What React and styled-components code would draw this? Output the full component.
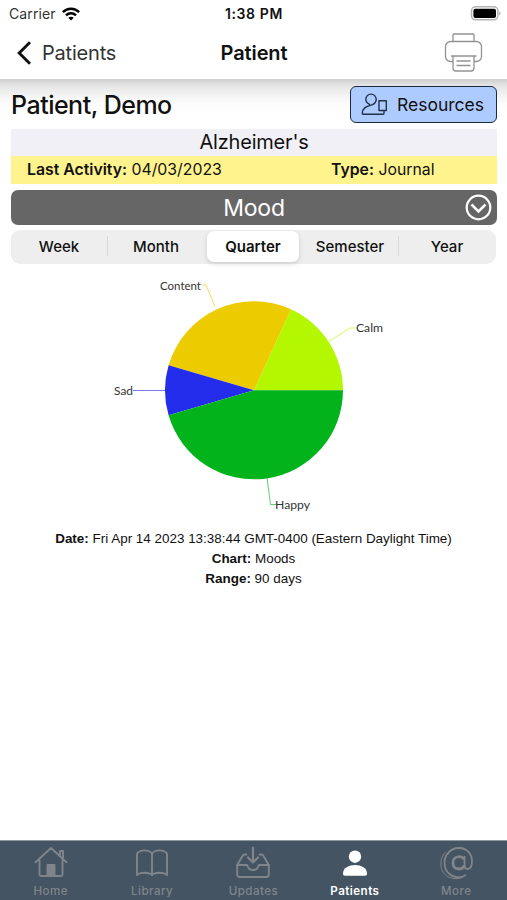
// App.jsx
import React, { useState } from "react";
import styled, { createGlobalStyle } from "styled-components";

const ranges = ["Week", "Month", "Quarter", "Semester", "Year"];

const moods = [
  { name: "Calm", value: 2, color: "#b3f700", x: 356, y: 331.5, width: 27, line: "329,341.5 350,328 356,328" },
  { name: "Content", value: 3, color: "#eccb00", x: 160, y: 289.5, width: 41, line: "215,306.5 206,285 201,285" },
  { name: "Sad", value: 1, color: "#252dec", x: 114, y: 394.5, width: 19, line: "165,390.5 133,390.5" },
  { name: "Happy", value: 5, color: "#02b31c", x: 275, y: 508.5, width: 35, line: "267,478 270.5,504.5 276,504.5" },
];

const tabs = [
  { name: "Home", Icon: HomeIcon },
  { name: "Library", Icon: LibraryIcon },
  { name: "Updates", Icon: UpdatesIcon },
  { name: "Patients", Icon: PatientsIcon },
  { name: "More", Icon: MoreIcon },
];

const MoodPie = () => {
  const cx = 254;
  const cy = 390.3;
  const r = 89;
  const total = moods.reduce((sum, m) => sum + m.value, 0);
  let angle = 0;

  const point = (a) => `${cx + r * Math.cos(a)} ${cy - r * Math.sin(a)}`;

  const slices = moods.map((mood) => {
    const start = angle;
    angle += (mood.value / total) * Math.PI * 2;
    return {
      ...mood,
      d: `M${cx} ${cy} L${point(start)} A${r} ${r} 0 0 0 ${point(angle)} Z`,
    };
  });

  return (
    <Chart viewBox="0 264 507 256">
      {slices.map((s) => (
        <g key={s.name}>
          <path d={s.d} fill={s.color} />
          <polyline
            points={s.line}
            fill="none"
            stroke={s.color}
            strokeWidth="0.9"
            strokeOpacity="0.7"
          />
          <ChartLabel x={s.x} y={s.y} textLength={s.width} lengthAdjust="spacingAndGlyphs">
            {s.name}
          </ChartLabel>
        </g>
      ))}
    </Chart>
  );
};

const App = () => {
  const [range, setRange] = useState("Quarter");
  const [tab, setTab] = useState("Patients");

  return (
    <Screen>
      <GlobalStyle />
      <StatusBar>
        <Carrier>
          <span>Carrier</span>
          <WifiIcon />
        </Carrier>
        <Time>1:38 PM</Time>
        <BatteryIcon />
      </StatusBar>

      <NavBar>
        <BackButton>
          <BackIcon />
          Patients
        </BackButton>
        <NavTitle>Patient</NavTitle>
        <PrinterIcon />
      </NavBar>

      <Content>
        <PatientRow>
          <PatientName>Patient, Demo</PatientName>
          <ResourcesButton>
            <ResourcesIcon />
            Resources
          </ResourcesButton>
        </PatientRow>
        <Diagnosis>Alzheimer's</Diagnosis>
        <ActivityRow>
          <span><b>Last Activity:</b> 04/03/2023</span>
          <ActivityType><b>Type:</b> Journal</ActivityType>
        </ActivityRow>
        <SectionHeader>
          <SectionTitle>Mood</SectionTitle>
          <ExpandIcon />
        </SectionHeader>
        <Segments>
          {ranges.map((item, i) => (
            <Segment
              key={item}
              $active={item === range}
              $divider={i > 0 && item !== range && ranges[i - 1] !== range}
              onClick={() => setRange(item)}
            >
              {item}
            </Segment>
          ))}
        </Segments>
      </Content>

      <MoodPie />

      <Details>
        <div><b>Date:</b> Fri Apr 14 2023 13:38:44 GMT-0400 (Eastern Daylight Time)</div>
        <div><b>Chart:</b> Moods</div>
        <div><b>Range:</b> 90 days</div>
      </Details>

      <TabBar>
        {tabs.map(({ name, Icon }) => (
          <Tab key={name} $active={name === tab} onClick={() => setTab(name)}>
            <Icon />
            {name}
          </Tab>
        ))}
      </TabBar>
    </Screen>
  );
};

export default App;

// Icons
function WifiIcon() {
  return (
    <svg width="18" height="14" viewBox="0 0 18 14" fill="none" stroke="#000" strokeWidth="2.5">
      <path d="M.9 5.2C5.4.6 12.6.6 17.1 5.2" />
      <path d="M4 8.4c2.8-2.8 7.2-2.8 10 0" />
      <path d="M9 13.4 6.3 10.7C7.8 9.3 10.2 9.3 11.7 10.7Z" fill="#000" stroke="none" />
    </svg>
  );
}

function BatteryIcon() {
  return (
    <svg width="31" height="15" viewBox="0 0 31 15">
      <rect x="1.5" y=".8" width="26.4" height="13" rx="4" fill="#fff" stroke="#b3b3b3" strokeWidth="1.5" />
      <rect x="3.4" y="2.7" width="22.6" height="9.2" rx="2" fill="#000" />
      <path d="M29.2 5.2c1.8.6 1.8 3.6 0 4.2Z" fill="#aaa" />
    </svg>
  );
}

function BackIcon() {
  return (
    <svg width="15" height="24" viewBox="0 0 15 24" fill="none" stroke="#111" strokeWidth="2.9">
      <path d="M13 1.2 2.2 12 13 22.8" />
    </svg>
  );
}

function PrinterIcon() {
  return (
    <svg width="40" height="40" viewBox="0 0 40 40" fill="none" stroke="#929292" strokeWidth="1.3">
      <path d="M9 8.5V2q0-1 1-1h19q1 0 1 1v6.5" />
      <path d="M9 28.5H6.500a5 5 0 0 1-5-5v-10a5 5 0 0 1 5-5h26a5 5 0 0 1 5 5v10a5 5 0 0 1-5 5H30" />
      <path d="M7 23h25.5M9 23v12q0 3 3 3h15q3 0 3-3V23M12.5 28h14M12.5 32.5h14" />
    </svg>
  );
}

function ResourcesIcon() {
  return (
    <svg width="27" height="23" viewBox="0 0 27 23" fill="none" stroke="#203047" strokeWidth="1.4" strokeLinejoin="round">
      <path d="M9 11.6C6 10.3 4.8 8.5 4.8 6.3a5.2 5.2 0 0 1 10.4 0c0 2.8-1.6 4.4-3.6 5.4C6.5 13.5 1.3 14 1.3 20.5q0 .7.7.7h20q1 0 1-1V18" />
      <rect x="18" y="7.7" width="7.3" height="9.8" />
    </svg>
  );
}

function ExpandIcon() {
  return (
    <svg width="27" height="27" viewBox="0 0 27 27" fill="none" stroke="#fff" strokeWidth="2.2">
      <circle cx="13.5" cy="13.5" r="11.8" />
      <path d="m6.5 10.5 7 7 7-7" strokeWidth="2.5" />
    </svg>
  );
}

function HomeIcon() {
  return (
    <svg width="34" height="34" viewBox="0 0 34 34" fill="none" stroke="currentColor" strokeWidth="1.9" strokeLinejoin="round" strokeLinecap="round">
      <path d="M1.5 16.2 17 2l15.500 14.200M5.5 14v14.500q0 1.500 1.500 1.500h20q1.500 0 1.500-1.500V14M26 9V5h3v7" />
      <path d="M13.5 30V19h7v11" fill="currentColor" />
    </svg>
  );
}

function LibraryIcon() {
  return (
    <svg width="34" height="34" viewBox="0 0 34 34" fill="none" stroke="currentColor" strokeWidth="1.9" strokeLinejoin="round">
      <path d="M17 7.5C14 3.3 5 3.3 2 7.5V29c3-3 12-3 15 0 3-3 12-3 15 0V7.5C29 3.3 20 3.3 17 7.5V29" />
    </svg>
  );
}

function UpdatesIcon() {
  return (
    <svg width="34" height="34" viewBox="0 0 34 34" fill="none" stroke="currentColor" strokeWidth="1.9" strokeLinejoin="round" strokeLinecap="round">
      <path d="M10.5 8.5h-2q-1.300 0-2 1.500L1.200 19v9.500q0 2.500 2.500 2.500h26.600q2.500 0 2.500-2.500V19l-5.300-9Q26.800 8.500 25.500 8.500h-2" />
      <path d="M1.200 19h9.300q1 0 1.300 1.500 1 3.500 5.200 3.500t5.200-3.500Q22.500 19 23.500 19h9.300" />
      <path d="M17 1.500v15M12 11.500l5 5 5-5" strokeWidth="2.2" />
    </svg>
  );
}

function PatientsIcon() {
  return (
    <svg width="34" height="34" viewBox="0 0 34 34" fill="currentColor">
      <circle cx="17" cy="10.7" r="6.2" />
      <path d="M5 27.500c0-11.500 24-11.500 24 0 0 1.600-.6 2.200-2 2.200H7c-1.400 0-2-.6-2-2.200Z" />
    </svg>
  );
}

function MoreIcon() {
  return (
    <svg width="34" height="34" viewBox="0 0 34 34" fill="none" stroke="currentColor" strokeWidth="1.8">
      <path d="M27 29C17 35 5.500 28 5.500 17 5.500 8 12 2 20 2c8 0 13 6 13 13.500 0 5-2 7.500-4.800 7.500-2 0-2.700-1.200-2.700-3.500V10" />
      <path d="M25 13.500C23.500 9 14 9.500 14 17s9 7.500 11.500 2.500" strokeWidth="2.8" />
      <path d="M6.500 6C-.5 13-.5 29 13 32.200c4 1 8 .4 11-1M9 8.500C13 1.500 20 .7 25 2.500" strokeWidth="1" />
    </svg>
  );
}

const GlobalStyle = createGlobalStyle`
  * {
    box-sizing: border-box;
  }
  body {
    margin: 0;
    background: #fff;
  }
  button {
    border: none;
    background: none;
    padding: 0;
    font-family: inherit;
    color: inherit;
    cursor: pointer;
  }
`;

const Screen = styled.div`
  display: flex;
  flex-direction: column;
  height: 100vh;
  background: #fff;
  color: #111;
  font-family: Inter, "Liberation Sans", sans-serif;
  overflow: hidden;
  white-space: nowrap;
`;

const StatusBar = styled.div`
  display: grid;
  grid-template-columns: 1fr auto 1fr;
  align-items: center;
  flex: none;
  height: 27px;
  padding: 0 6px 0 9px;

  > :last-child {
    justify-self: end;
  }
`;

const Carrier = styled.div`
  display: flex;
  align-items: center;
  gap: 6px;
  font-size: 14px;
  letter-spacing: 0.1px;
  color: #333;
`;

const Time = styled.div`
  font-size: 14px;
  font-weight: 600;
  letter-spacing: 0.6px;
  margin-right: 2px;
`;

const NavBar = styled.div`
  display: grid;
  grid-template-columns: 1fr auto 1fr;
  align-items: center;
  flex: none;
  height: 52px;
  padding: 0 23px 0 17px;

  > :last-child {
    justify-self: end;
  }
`;

const BackButton = styled.button`
  display: flex;
  align-items: center;
  gap: 10px;
  font-size: 20px;
  letter-spacing: -0.2px;
  color: #333;
`;

const NavTitle = styled.div`
  font-size: 20px;
  font-weight: 600;
  margin-left: 7px;
  letter-spacing: -0.1px;
`;

const Content = styled.div`
  flex: none;
  padding: 6px 10px 0 11px;
  background: linear-gradient(#cecece, #e6e6e6 7px, #f8f8f8 20px, #fff 32px);
`;

const PatientRow = styled.div`
  display: flex;
  justify-content: space-between;
  align-items: center;
  height: 40px;
`;

const PatientName = styled.div`
  font-size: 25px;
  font-weight: 500;
  letter-spacing: -0.5px;
`;

const ResourcesButton = styled.button`
  display: flex;
  align-items: center;
  gap: 9px;
  width: 147px;
  height: 37px;
  margin-bottom: 1px;
  padding-left: 10px;
  border: 1.5px solid #1c2a40;
  border-radius: 6px;
  background: #adcbff;
  font-size: 17.5px;
`;

const Diagnosis = styled.div`
  height: 27px;
  margin-top: 4px;
  background: #f1f0f6;
  font-size: 20px;
  letter-spacing: -0.2px;
  line-height: 27px;
  text-align: center;
`;

const ActivityRow = styled.div`
  display: grid;
  grid-template-columns: 1fr 1fr;
  height: 28px;
  background: #fff38d;
  font-size: 15.8px;
  line-height: 28px;
  padding-left: 16px;

  b {
    font-weight: 600;
  }
`;

const ActivityType = styled.span`
  padding-left: 69px;
`;

const SectionHeader = styled.div`
  display: grid;
  grid-template-columns: 1fr auto 1fr;
  align-items: center;
  height: 35px;
  margin-top: 6px;
  padding-right: 5px;
  border-radius: 7px;
  background: #666;
  color: #fff;

  > :last-child {
    justify-self: end;
  }
`;

const SectionTitle = styled.div`
  grid-column: 2;
  font-size: 23px;
  letter-spacing: -0.2px;
  padding-left: 5px;
`;

const Segments = styled.div`
  display: grid;
  grid-template-columns: repeat(5, 1fr);
  height: 34px;
  margin: 5px 1px 0 0;
  padding: 1px 0 2px;
  border-radius: 9px;
  background: #eee;
`;

const Segment = styled.button`
  position: relative;
  margin: 0 3px 0 2px;
  border-radius: 7px;
  font-size: 15px;
  font-weight: ${({ $active }) => ($active ? 600 : 500)};
  background: ${({ $active }) => ($active ? "#fff" : "transparent")};
  box-shadow: ${({ $active }) =>
    $active ? "0 2px 5px rgba(0, 0, 0, 0.14)" : "none"};

  &::before {
    content: "";
    display: ${({ $divider }) => ($divider ? "block" : "none")};
    position: absolute;
    left: -3px;
    top: 5px;
    width: 1px;
    height: 20px;
    background: #d9d9d9;
  }
`;

const Chart = styled.svg`
  flex: none;
  width: 507px;
  height: 256px;
`;

const ChartLabel = styled.text`
  font-family: Lato, sans-serif;
  font-size: 12px;
  fill: #333;
`;

const Details = styled.div`
  flex: 1;
  padding-top: 9px;
  font-family: "Liberation Sans", Arial, sans-serif;
  font-size: 13.45px;
  line-height: 20px;
  text-align: center;
`;

const TabBar = styled.div`
  display: grid;
  grid-template-columns: repeat(5, 1fr);
  flex: none;
  height: 60px;
  border-top: 1px solid #8c979f;
  background: #445462;
`;

const Tab = styled.button`
  display: flex;
  flex-direction: column;
  align-items: center;
  padding-top: 5px;
  gap: 4px;
  font-size: 11.6px;
  line-height: 15px;
  letter-spacing: 0.45px;
  font-weight: ${({ $active }) => ($active ? 600 : 500)};
  color: ${({ $active }) => ($active ? "#fff" : "#7f858b")};
`;
